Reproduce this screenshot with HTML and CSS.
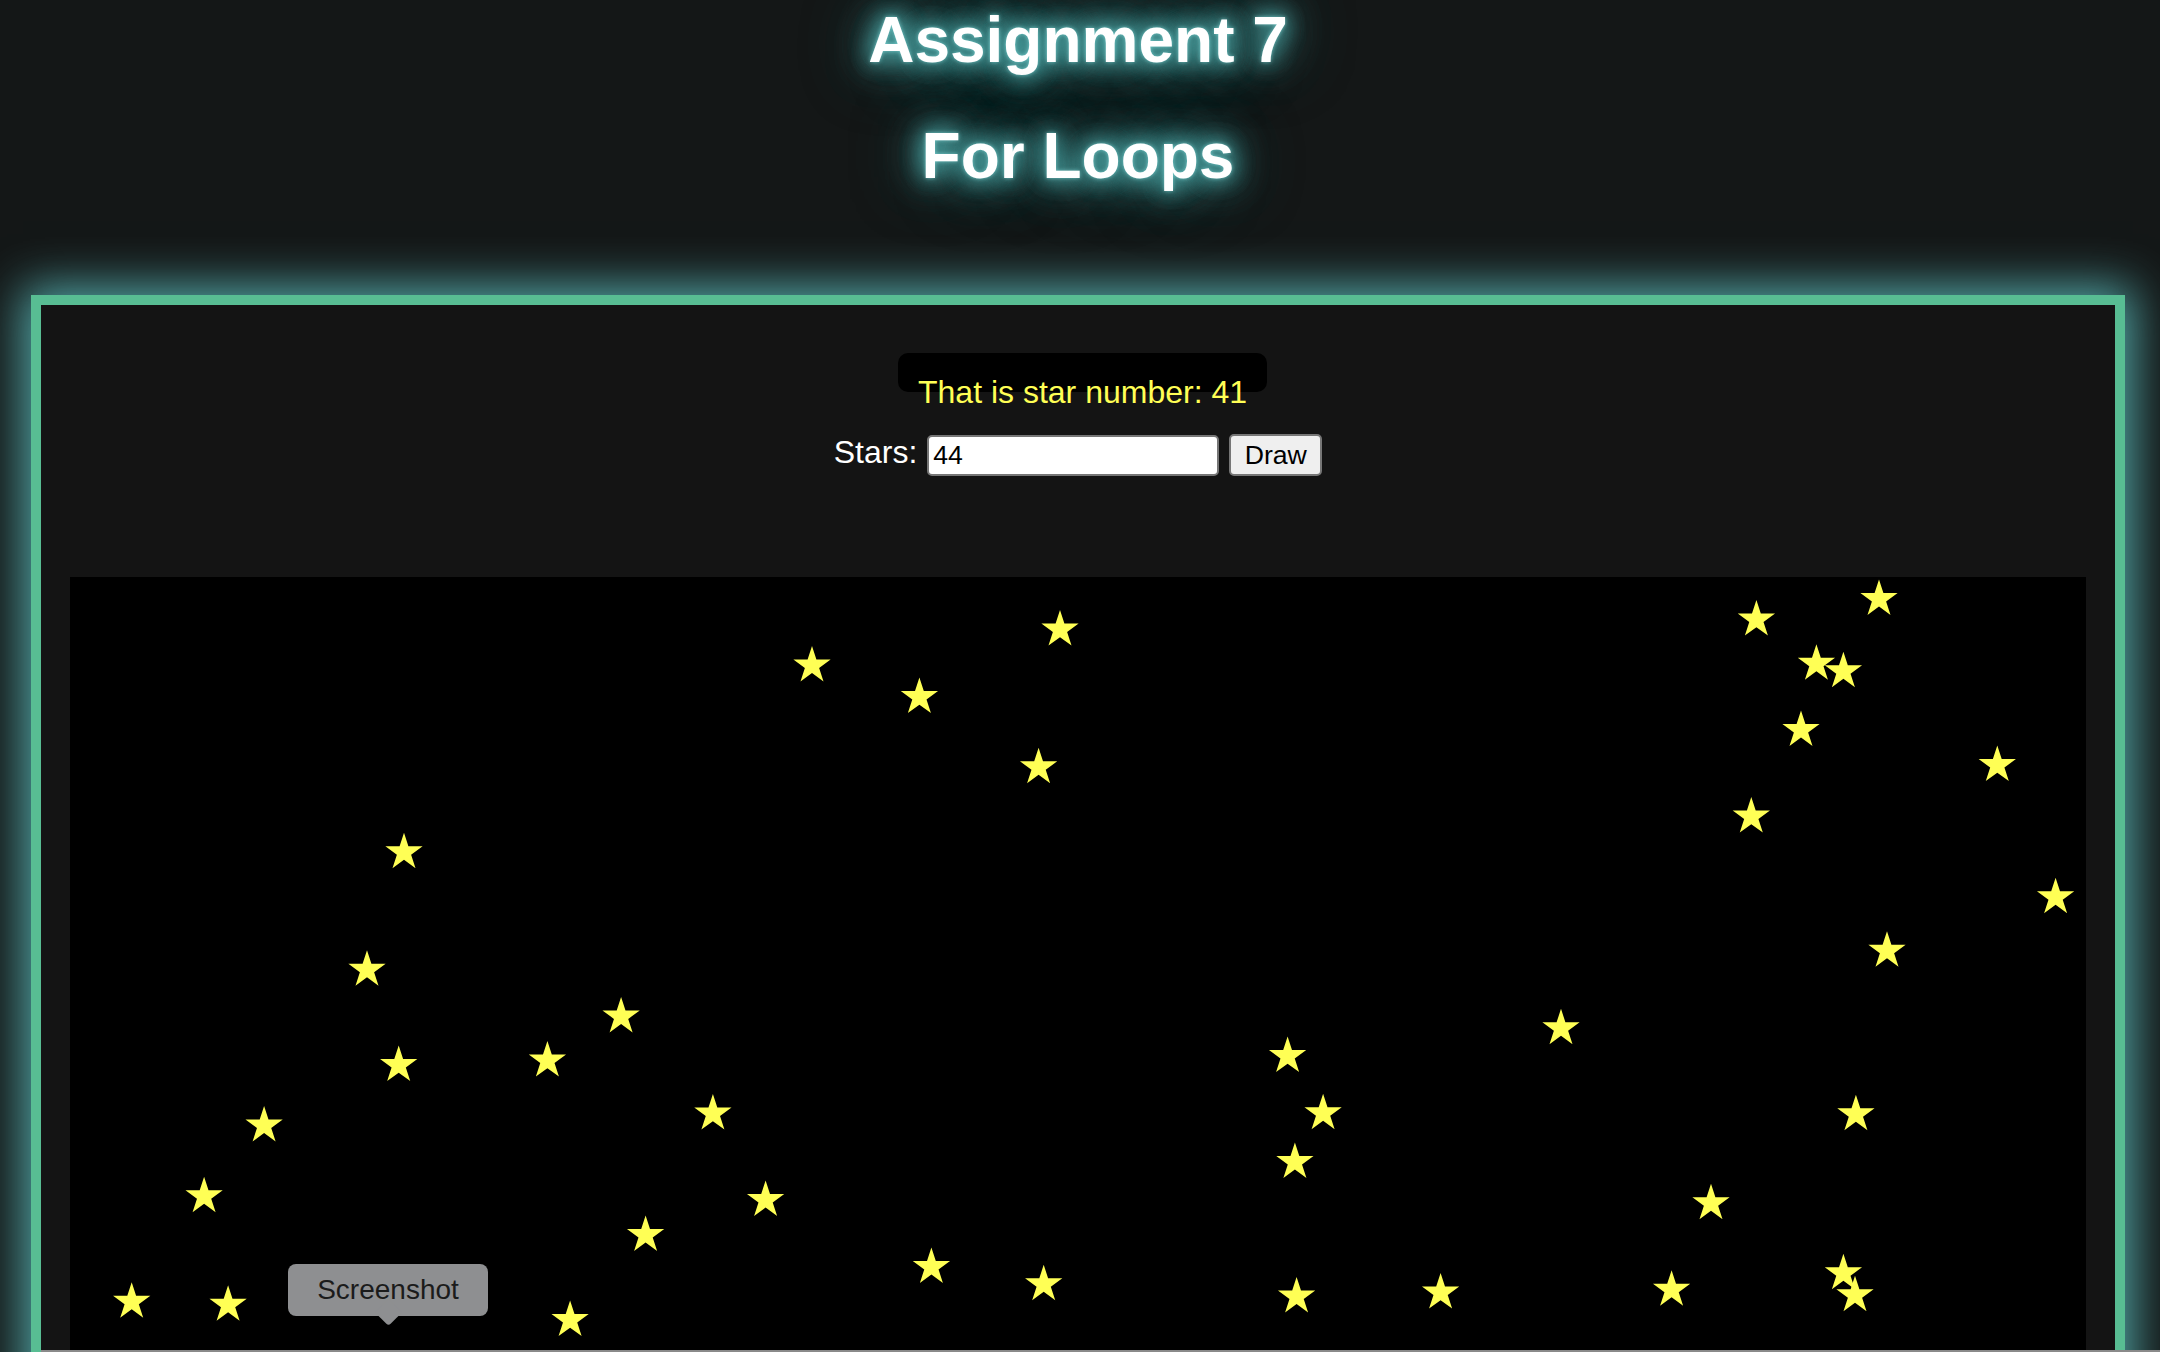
FILE: index.html
```html
<!DOCTYPE html>
<html lang="en">
<head>
<meta charset="utf-8">
<title>Assignment 7 - For Loops</title>
<link rel="stylesheet" href="styles.css">
</head>
<body>
<div class="page">
  <header class="header">
    <h1 class="title title-first">Assignment 7</h1>
    <h1 class="title title-second">For Loops</h1>
  </header>

  <main class="frame">
    <div class="msg"><span class="msg-text">That is star number: 41</span></div>

    <div class="controls">
      <label class="controls-label" for="stars">Stars:</label>
      <input class="controls-input" id="stars" type="text" value="44">
      <button class="controls-button" type="button">Draw</button>
    </div>

    <div class="sky">
      <svg class="sky-svg" width="2016" height="1000" viewBox="0 0 2016 1000" xmlns="http://www.w3.org/2000/svg">
        <defs>
          <polygon id="star" points="0,-17.73 4.40,-4.19 18.64,-4.19 7.12,4.18 11.52,17.73 0,9.36 -11.52,17.73 -7.12,4.18 -18.64,-4.19 -4.40,-4.19"/>
        </defs>
        <g class="stars">
          <use href="#star" x="334" y="273.5"/>
          <use href="#star" x="297" y="391"/>
          <use href="#star" x="742" y="86.7"/>
          <use href="#star" x="849.4" y="118.3"/>
          <use href="#star" x="990" y="50.8"/>
          <use href="#star" x="968.6" y="188.5"/>
          <use href="#star" x="1809" y="20.2"/>
          <use href="#star" x="1686.4" y="40.8"/>
          <use href="#star" x="1746.4" y="85"/>
          <use href="#star" x="1773.4" y="92.5"/>
          <use href="#star" x="1731" y="151.2"/>
          <use href="#star" x="1927.3" y="186.3"/>
          <use href="#star" x="1681.3" y="237.8"/>
          <use href="#star" x="1985.6" y="318.5"/>
          <use href="#star" x="1817" y="372"/>
          <use href="#star" x="551.1" y="437.7"/>
          <use href="#star" x="328.7" y="486.3"/>
          <use href="#star" x="477.4" y="481.8"/>
          <use href="#star" x="642.9" y="534.8"/>
          <use href="#star" x="194.1" y="546.7"/>
          <use href="#star" x="134.1" y="617.5"/>
          <use href="#star" x="575.6" y="656.2"/>
          <use href="#star" x="61.7" y="723"/>
          <use href="#star" x="158.1" y="726"/>
          <use href="#star" x="500.1" y="741.3"/>
          <use href="#star" x="1217.6" y="477.3"/>
          <use href="#star" x="1253.1" y="534.5"/>
          <use href="#star" x="1224.9" y="583.2"/>
          <use href="#star" x="695.6" y="621.2"/>
          <use href="#star" x="861.4" y="688.2"/>
          <use href="#star" x="973.7" y="705.5"/>
          <use href="#star" x="1226.6" y="717.7"/>
          <use href="#star" x="1491" y="449.5"/>
          <use href="#star" x="1785.9" y="535.5"/>
          <use href="#star" x="1641" y="624.5"/>
          <use href="#star" x="1370.6" y="713.8"/>
          <use href="#star" x="1601.6" y="711"/>
          <use href="#star" x="1773.4" y="694.5"/>
          <use href="#star" x="1785" y="716.5"/>
        </g>
      </svg>
    </div>
  </main>
</div>

<div class="tooltip">Screenshot</div>
<div class="window-edge"></div>
</body>
</html>
```

FILE: styles.css
```css
html, body {
  margin: 0;
  padding: 0;
}

body {
  background: #141717;
  font-family: "Liberation Sans", Arial, Helvetica, sans-serif;
  color: #ffffff;
  overflow: hidden;
}

.page {
  margin: 0 35px 0 31px;
}

.header {
  display: flex;
  flex-direction: column;
  align-items: center;
}

.title {
  font-size: 64px;
  line-height: 74px;
  font-weight: 700;
  color: #ffffff;
  margin: 0;
  text-shadow: 0 0 4px rgba(160, 255, 255, 0.6), 0 0 22px #4a9e9e, 0 0 22px #4a9e9e, 0 0 44px #3c8a8a, 0 0 44px #3c8a8a, 0 0 70px #2f7070;
}

.title-first {
  margin-top: 3px;
}

.title-second {
  margin-top: 42px;
}

.frame {
  margin-top: 102px;
  border: 10px solid #58bd93;
  background: #141414;
  box-shadow: 0 0 44px 8px rgba(90, 185, 185, 0.9);
  padding: 48px 0 0;
  height: 1400px;
  box-sizing: border-box;
}

.msg {
  width: 369px;
  height: 39px;
  margin-left: calc(50% - 180px);
  background: #000000;
  border-radius: 10px;
  box-sizing: border-box;
  padding-top: 21px;
  display: flex;
  justify-content: center;
}

.msg-text {
  display: block;
  font-size: 32px;
  line-height: 36px;
  color: #ffff55;
  white-space: nowrap;
}

.controls {
  margin-top: 42px;
  display: flex;
  justify-content: center;
  align-items: center;
  gap: 10px;
  height: 42px;
}

.controls-label {
  font-size: 32px;
  line-height: 37px;
  color: #ffffff;
  margin-bottom: 6px;
}

.controls-input {
  width: 292px;
  height: 41px;
  box-sizing: border-box;
  border: 2px solid #767676;
  border-radius: 5px;
  padding: 0 4px;
  background: #ffffff;
  color: #000000;
  font-family: "Liberation Sans", Arial, sans-serif;
  font-size: 26.67px;
  outline: none;
}

.controls-button {
  width: 93px;
  height: 42px;
  box-sizing: border-box;
  border: 2px solid #767676;
  border-radius: 5px;
  background: #efefef;
  color: #000000;
  font-family: "Liberation Sans", Arial, sans-serif;
  font-size: 26.67px;
  padding: 0;
}

.sky {
  margin: 101px auto 0;
  width: 2016px;
  height: 1000px;
  background: #000000;
}

.sky-svg {
  display: block;
}

.stars {
  fill: #ffff55;
}

.tooltip {
  position: fixed;
  left: 288px;
  top: 1264px;
  width: 200px;
  height: 52px;
  background: #8e8f91;
  border-radius: 8px;
  color: #1b1b1b;
  font-family: "Liberation Sans", Arial, sans-serif;
  font-size: 28px;
  line-height: 52px;
  text-align: center;
}

.tooltip::after {
  content: "";
  position: absolute;
  left: 90.5px;
  top: 39px;
  width: 19px;
  height: 19px;
  background: #8e8f91;
  transform: rotate(45deg);
  border-bottom-right-radius: 3px;
  z-index: -1;
}

.window-edge {
  position: fixed;
  left: 41px;
  right: 0;
  bottom: 0;
  height: 2px;
  background: #8a8a8a;
}
```
